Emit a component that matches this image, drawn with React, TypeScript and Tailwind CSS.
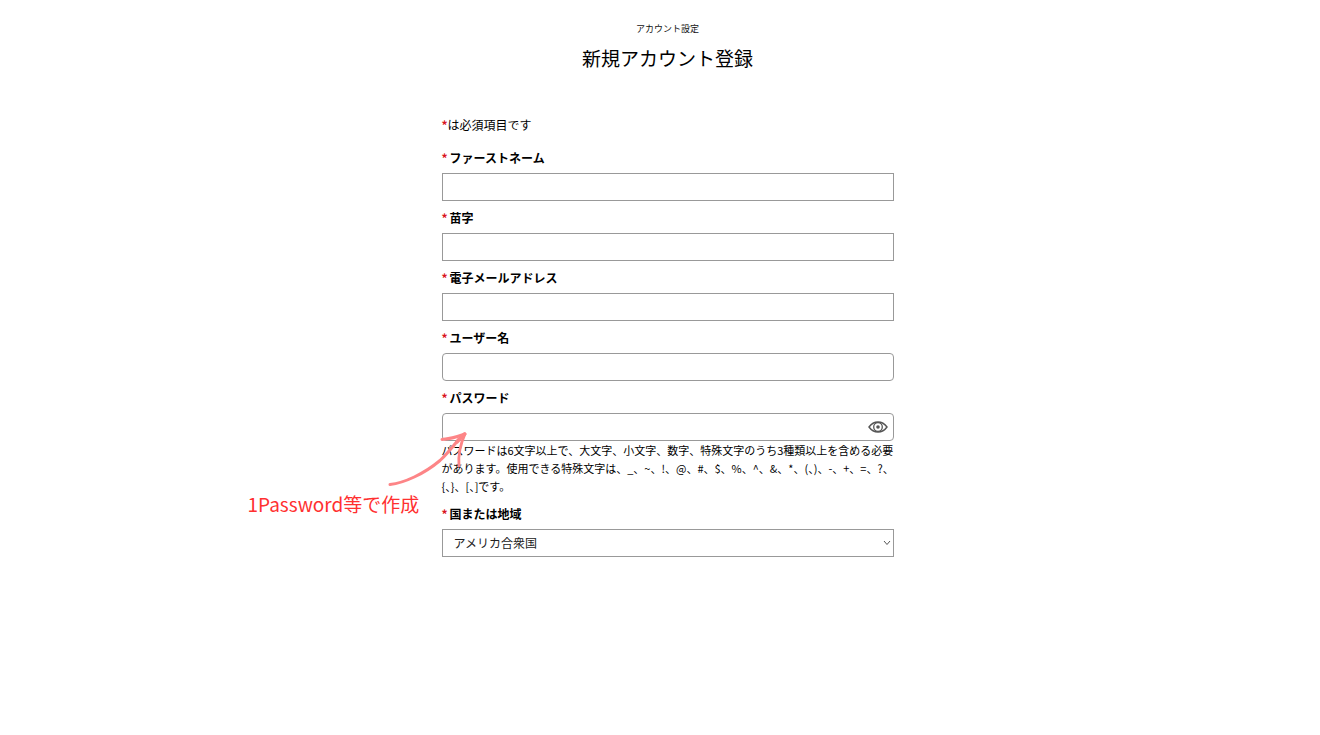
import type { ReactNode } from "react";

const boxClass =
  "block h-7 w-full border border-[#999] bg-white px-[11px] text-[12px] text-[#222] outline-none";

function Field({ id, label, children }: { id: string; label: string; children: ReactNode }) {
  return (
    <div className="flex flex-col gap-[5px]">
      <label htmlFor={id} className="flex h-5 items-center gap-[2px] text-[12px] leading-5 font-bold">
        <span className="text-[#d9161c]">*</span>
        {label}
      </label>
      {children}
    </div>
  );
}

function EyeIcon() {
  return (
    <svg viewBox="0 0 20 12" className="h-3 w-5" fill="none" stroke="#555" strokeWidth="1.4">
      <path d="M1 6C3.4 2.6 6.5 1 10 1s6.600 1.600 9 5c-2.400 3.400-5.500 5-9 5S3.400 9.400 1 6Z" />
      <circle cx="10" cy="6" r="4.300" strokeWidth="1.300" />
      <circle cx="10" cy="6" r="1.800" fill="#555" stroke="none" />
    </svg>
  );
}

function PasswordNote() {
  return (
    <div className="pointer-events-none absolute top-[18px] right-full -mr-[26px] flex w-[220px] flex-col">
      <svg
        viewBox="0 0 80 56"
        className="h-14 w-20 self-end"
        fill="none"
        stroke="#fd8587"
        strokeLinecap="round"
        strokeLinejoin="round"
        aria-hidden="true"
      >
        <path d="M2 53.500C16 52 36 43 52 29.500 60 22 66 14 71 8" strokeWidth="3" />
        <path d="M69 11 76.500 3" strokeWidth="3.500" />
        <path d="M54 8.500C62 8 70 5.500 77 3" strokeWidth="3" />
        <path d="M77 3C72 14 70 24 71 35" strokeWidth="2.800" />
      </svg>
      <p className="-mt-[3px] h-10 text-[19px] leading-10 font-normal whitespace-nowrap text-[#ff3030]">
        1Password等で作成
      </p>
    </div>
  );
}

export default function App() {
  return (
    <main className="min-h-screen bg-white pt-[21px] pb-16 pl-[15px] font-['Noto_Sans_CJK_JP',sans-serif] text-[#111]">
      <header className="flex flex-col items-center">
        <p className="text-[9px] leading-4">アカウント設定</p>
        <h1 className="mt-[7px] text-[19px] leading-7 text-black">新規アカウント登録</h1>
      </header>

      <form className="mx-auto mt-[43px] w-full max-w-[452px] text-black">
        <p className="text-[12px] leading-5">
          <span className="font-bold text-[#d9161c]">*</span>は必須項目です
        </p>

        <div className="mt-[13px] flex flex-col gap-[7px]">
          <Field id="first-name" label="ファーストネーム">
            <input id="first-name" type="text" className={boxClass} />
          </Field>
          <Field id="last-name" label="苗字">
            <input id="last-name" type="text" className={boxClass} />
          </Field>
          <Field id="email" label="電子メールアドレス">
            <input id="email" type="email" className={boxClass} />
          </Field>
          <Field id="username" label="ユーザー名">
            <input id="username" type="text" className={`${boxClass} rounded-sm`} />
          </Field>
          <Field id="password" label="パスワード">
            <div className="relative">
              <div className="relative">
                <input
                  id="password"
                  type="password"
                  aria-describedby="password-help"
                  className={`${boxClass} rounded-sm`}
                />
                <button
                  type="button"
                  aria-label="パスワードを表示"
                  className="absolute inset-y-0 right-1.5 flex items-center"
                >
                  <EyeIcon />
                </button>
              </div>
              <p id="password-help" className="pb-0.5 text-[11px] leading-[18px] whitespace-nowrap">
                パスワードは6文字以上で、大文字、小文字、数字、特殊文字のうち3種類以上を含める必要
                <br />
                があります。使用できる特殊文字は、_、~、!、@、#、$、%、^、&amp;、*、(、)、-、+、=、?、
                <br />
                {"{、}、[、]です。"}
              </p>
              <PasswordNote />
            </div>
          </Field>
          <Field id="country" label="国または地域">
            <div className="relative">
              <select id="country" defaultValue="US" className={`${boxClass} appearance-none`}>
                <option value="US">アメリカ合衆国</option>
                <option value="JP">日本</option>
              </select>
              <svg
                viewBox="0 0 8 6"
                className="pointer-events-none absolute top-[11px] right-[3px] h-1.5 w-2"
                fill="none"
                stroke="#555"
                aria-hidden="true"
              >
                <path d="M1 1l3 3.500L7 1" />
              </svg>
            </div>
          </Field>
        </div>
      </form>
    </main>
  );
}
